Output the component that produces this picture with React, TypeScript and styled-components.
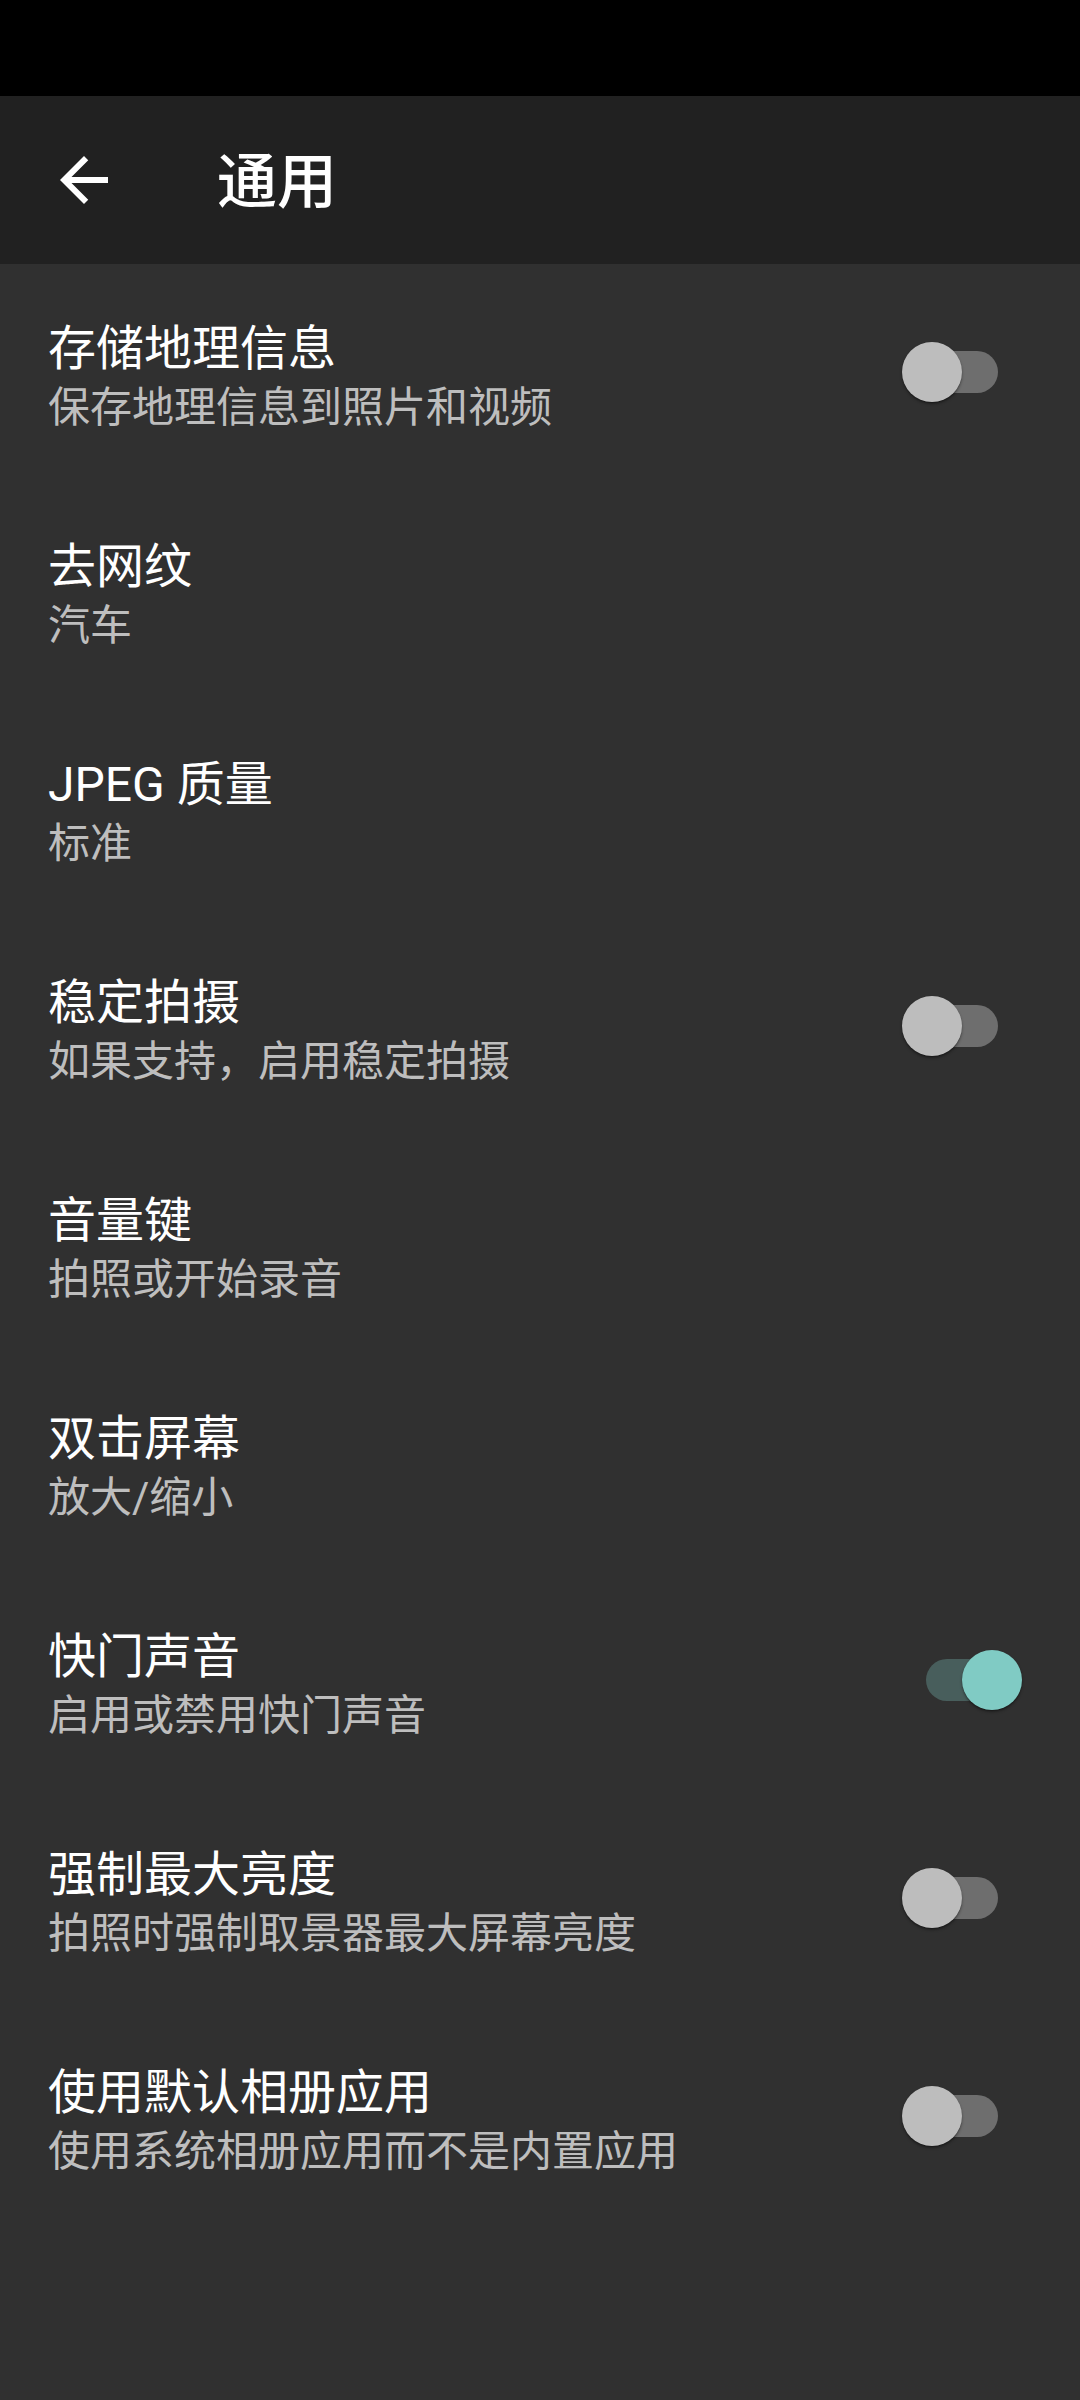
import React from "react";
import styled, { createGlobalStyle } from "styled-components";

const GlobalStyle = createGlobalStyle`
  html, body {
    margin: 0;
    padding: 0;
    background: #303030;
  }
  body {
    font-family: Roboto, "Noto Sans CJK SC", sans-serif;
    -webkit-font-smoothing: antialiased;
  }
`;

const Screen = styled.div`
  width: 1080px;
  min-height: 2400px;
  background: #303030;
  display: flex;
  flex-direction: column;
`;

const StatusBar = styled.div`
  height: 96px;
  background: #000000;
  flex-shrink: 0;
`;

const Toolbar = styled.header`
  height: 168px;
  background: #212121;
  display: flex;
  align-items: center;
  flex-shrink: 0;
`;

const BackButton = styled.button`
  width: 72px;
  height: 72px;
  margin-left: 48px;
  padding: 0;
  border: none;
  background: transparent;
  display: flex;
  align-items: center;
  justify-content: center;
  color: #ffffff;
`;

const Title = styled.h1`
  margin: 0 0 0 97px;
  font-family: Roboto, "Noto Sans CJK SC", sans-serif;
  font-size: 60px;
  font-weight: 500;
  line-height: 80px;
  color: #ffffff;
  transform: translateY(3px);
`;

const List = styled.main`
  display: flex;
  flex-direction: column;
`;

const Row = styled.div`
  height: 218px;
  box-sizing: border-box;
  padding: 54px 58px 46px 48px;
  display: flex;
  align-items: center;
`;

const TextCol = styled.div`
  flex: 1;
  display: flex;
  flex-direction: column;
  align-self: flex-start;
`;

const ItemTitle = styled.div`
  font-size: 48px;
  line-height: 62px;
  color: #ffffff;
  white-space: nowrap;
`;

const ItemSummary = styled.div`
  font-size: 42px;
  line-height: 56px;
  color: rgba(255, 255, 255, 0.7);
  white-space: nowrap;
`;

const SwitchRoot = styled.div`
  position: relative;
  width: 120px;
  height: 60px;
  display: flex;
  align-items: center;
  justify-content: center;
  flex-shrink: 0;
  margin-top: -10px;
`;

const Track = styled.div<{ $on: boolean }>`
  width: 72px;
  height: 42px;
  border-radius: 21px;
  background: ${(p) =>
    p.$on ? "rgba(128, 203, 196, 0.3)" : "rgba(255, 255, 255, 0.3)"};
`;

const Thumb = styled.div<{ $on: boolean }>`
  position: absolute;
  top: 0;
  ${(p) => (p.$on ? "right: 0;" : "left: 0;")}
  width: 60px;
  height: 60px;
  border-radius: 50%;
  background: ${(p) => (p.$on ? "#80cbc4" : "#bdbdbd")};
  box-shadow: 0 2px 3px rgba(0, 0, 0, 0.35), 0 1px 1px rgba(0, 0, 0, 0.2);
`;

type Item = { title: string; summary: string; toggle?: boolean };

const items: Item[] = [
  { title: "存储地理信息", summary: "保存地理信息到照片和视频", toggle: false },
  { title: "去网纹", summary: "汽车" },
  { title: "JPEG 质量", summary: "标准" },
  { title: "稳定拍摄", summary: "如果支持，启用稳定拍摄", toggle: false },
  { title: "音量键", summary: "拍照或开始录音" },
  { title: "双击屏幕", summary: "放大/缩小" },
  { title: "快门声音", summary: "启用或禁用快门声音", toggle: true },
  { title: "强制最大亮度", summary: "拍照时强制取景器最大屏幕亮度", toggle: false },
  { title: "使用默认相册应用", summary: "使用系统相册应用而不是内置应用", toggle: false },
];

const Switch: React.FC<{ on: boolean }> = ({ on }) => (
  <SwitchRoot>
    <Track $on={on} />
    <Thumb $on={on} />
  </SwitchRoot>
);

const BackArrow = () => (
  <svg width="72" height="72" viewBox="0 0 24 24" fill="currentColor">
    <path d="M20 11H7.83l5.59-5.59L12 4l-8 8 8 8 1.41-1.41L7.83 13H20v-2z" />
  </svg>
);

export default function App() {
  return (
    <>
      <GlobalStyle />
      <Screen>
        <StatusBar />
        <Toolbar>
          <BackButton aria-label="返回">
            <BackArrow />
          </BackButton>
          <Title>通用</Title>
        </Toolbar>
        <List>
          {items.map((it) => (
            <Row key={it.title}>
              <TextCol>
                <ItemTitle>{it.title}</ItemTitle>
                <ItemSummary>{it.summary}</ItemSummary>
              </TextCol>
              {it.toggle !== undefined && <Switch on={it.toggle} />}
            </Row>
          ))}
        </List>
      </Screen>
    </>
  );
}
